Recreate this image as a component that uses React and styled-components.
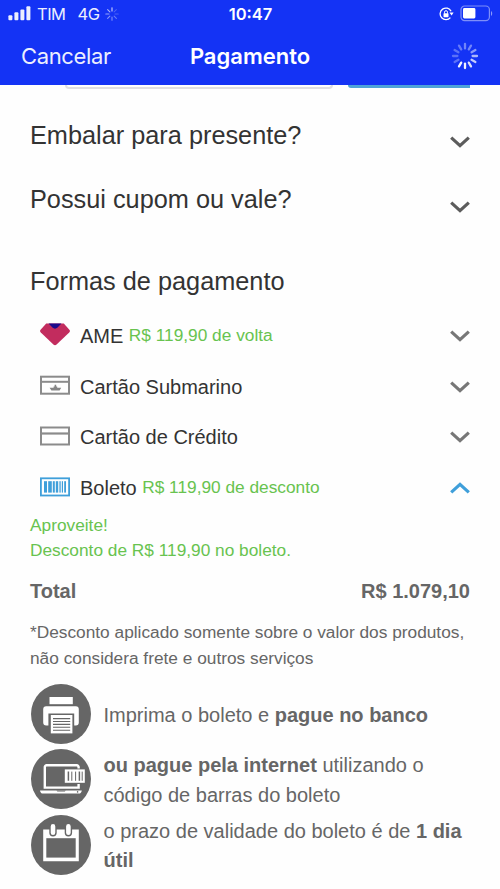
import React from "react";
import styled, { createGlobalStyle } from "styled-components";

const spokes = [0, 30, 60, 90, 120, 150, 180, 210, 240, 270, 300, 330];
const spokeOpacity = [0.4, 0.4, 0.5, 0.65, 0.75, 0.85, 0.95, 0.95, 0.3, 0.3, 0.3, 0.35];

function Spinner() {
  return (
    <svg width="28" height="28" viewBox="-14 -14 28 28">
      {spokes.map((angle, i) => (
        <line
          key={angle}
          y1="-7.6"
          y2="-12"
          stroke="#fff"
          strokeWidth="2.3"
          strokeLinecap="round"
          opacity={spokeOpacity[i]}
          transform={`rotate(${angle})`}
        />
      ))}
    </svg>
  );
}

function NetworkSpinner() {
  return (
    <svg width="14" height="14" viewBox="-7 -7 14 14">
      {[0, 45, 90, 135, 180, 225, 270, 315].map((angle, i) => (
        <line
          key={angle}
          y1="-3"
          y2="-6.2"
          stroke="#fff"
          strokeWidth="1.1"
          strokeLinecap="round"
          opacity={[0.85, 0.25, 0.25, 0.4, 0.5, 0.55, 0.6, 0.7][i]}
          transform={`rotate(${angle})`}
        />
      ))}
    </svg>
  );
}

function Signal() {
  return (
    <svg width="23" height="15" viewBox="0 0 23 15" fill="#fff">
      <rect x="0.4" y="9.2" width="4" height="5" rx="1" />
      <rect x="6.4" y="6.3" width="4" height="7.9" rx="1" />
      <rect x="12.4" y="3.4" width="4" height="10.8" rx="1" />
      <rect x="18.4" y="0.2" width="4" height="14" rx="1" />
    </svg>
  );
}

function RotationLock() {
  return (
    <svg width="15" height="14" viewBox="0 0 15 14" fill="none" stroke="#fff">
      <path d="M12.1 4.2A5.8 5.8 0 1 0 11.4 10.6" strokeWidth="1.3" />
      <path d="M10.4 5.6h4.2l-2 3z" fill="#fff" stroke="none" />
      <path d="M5.500 6.600V5.200a1.500 1.500 0 0 1 3 0v1.400" strokeWidth="1" />
      <rect x="4.500" y="6.200" width="5" height="4" rx="0.6" fill="#fff" stroke="none" />
    </svg>
  );
}

function Battery() {
  return (
    <svg width="33" height="17" viewBox="0 0 33 17">
      <rect x="1" y="1" width="28.4" height="14.6" rx="3.6" fill="none" stroke="#fff" strokeOpacity="0.45" strokeWidth="1.2" />
      <rect x="3" y="3.1" width="12.4" height="10.4" rx="1.4" fill="#fff" />
      <path d="M31 6c1.6.7 1.6 4.300 0 5z" fill="#fff" opacity="0.5" />
    </svg>
  );
}

function Chevron({ color, up }) {
  return (
    <svg width="20" height="12" viewBox="0 0 20 12">
      <path
        d={up ? "M1.2 10.4 10 2.400l8.800 8" : "M1.2 1.6 10 9.600l8.800-8"}
        fill="none"
        stroke={color}
        strokeWidth="3.2"
      />
    </svg>
  );
}

function AmeIcon() {
  return (
    <svg width="30" height="23" viewBox="0 0 30 23">
      <path d="M6.200.4h17.600L29.600 7q.8 1.200-.4 2.400L16.600 21.600q-1.600 1.400-3.200 0L.8 9.400Q-.4 8.200.4 7z" fill="#c22c5e" />
      <path d="M8.600.4h12.800l-3.800 4.200q-2.600 2.200-5.200 0z" fill="#1a0a8c" />
    </svg>
  );
}

function StoreCardIcon() {
  return (
    <svg width="30" height="20" viewBox="0 0 30 20">
      <rect x="1" y="1.700" width="28" height="17" fill="none" stroke="#8b8b8b" strokeWidth="2" />
      <path d="M1 6.800h28" stroke="#8b8b8b" strokeWidth="2" />
      <path d="M9.600 12.800h4v-1.200h1V9.800h1.600v1.800h1v1.200h4L19.600 15.600h-8.200z" fill="#858585" />
    </svg>
  );
}

function CardIcon() {
  return (
    <svg width="30" height="20" viewBox="0 0 30 20">
      <rect x="1" y="1.500" width="28" height="17" fill="none" stroke="#8b8b8b" strokeWidth="2" />
      <path d="M1 7.500h28" stroke="#8b8b8b" strokeWidth="2.2" />
    </svg>
  );
}

function BarcodeIcon() {
  return (
    <svg width="30" height="20" viewBox="0 0 30 20" fill="#3f9fda">
      <rect x="0.900" y="1.300" width="28.200" height="17.200" fill="none" stroke="#3f9fda" strokeWidth="1.800" />
      <rect x="4" y="4.200" width="3" height="11.400" />
      <rect x="8.200" y="4.200" width="3.600" height="11.400" />
      <rect x="12.800" y="4.200" width="2" height="11.400" />
      <rect x="15.800" y="4.200" width="2.400" height="11.400" />
      <rect x="19.400" y="4.200" width="1.300" height="11.400" />
      <rect x="21.800" y="4.200" width="1.200" height="11.400" />
      <rect x="24.200" y="4.200" width="1.800" height="11.400" />
    </svg>
  );
}

function PrinterIcon() {
  return (
    <svg width="60" height="60" viewBox="0 0 60 60" fill="#fff">
      <rect x="18.5" y="13" width="23.3" height="7.2" />
      <path d="M15.2 22.2h29.6a3 3 0 0 1 3 3V38.6a3 3 0 0 1-3 3h-1.6V29.4H17.400v12.200h-2.200a3 3 0 0 1-3-3V25.200a3 3 0 0 1 3-3z" />
      <rect x="19.800" y="31" width="21.600" height="18.400" />
      <path
        d="M22 34.600h17.200M22 37.500h17.200M22 40.400h17.200M22 43.300h17.200M22 46.200h17.200"
        stroke="#666"
        strokeWidth="1.100"
      />
    </svg>
  );
}

function LaptopIcon() {
  return (
    <svg width="60" height="60" viewBox="0 0 60 60" fill="#fff">
      <path
        d="M47.600 19.600V18a1.800 1.800 0 0 0-1.800-1.800H15.600a1.800 1.800 0 0 0-1.800 1.800v20.600h33.800v-3.600"
        fill="none"
        stroke="#fff"
        strokeWidth="2.400"
      />
      <path d="M9 41.400h41.800q-.4 3-3 3.200H12q-2.600-.2-3-3.200z" />
      <path d="M25.400 41.400h9.400l-1 1h-7.400z" fill="#666" />
      <circle cx="46.600" cy="42.900" r="0.8" fill="#666" />
      <rect x="33.800" y="20.400" width="20" height="13.400" />
      <path d="M37.400 22.600v9.200M48.400 22.600v9.200" stroke="#666" strokeWidth="1.500" />
      <path d="M40.800 22.600v9.200M44.600 22.600v9.200M51.200 22.600v9.200" stroke="#666" strokeWidth="1" />
    </svg>
  );
}

function CalendarIcon() {
  return (
    <svg width="60" height="60" viewBox="0 0 60 60">
      <path d="M12.200 14.600h35.600v31.600H12.200z" fill="#fff" />
      <path d="M15.300 23.200h29.400v19.400H15.300z" fill="#666" />
      <rect x="19" y="8.400" width="6" height="12.400" rx="3" fill="#fff" stroke="#666" strokeWidth="1.400" />
      <rect x="34.400" y="8.400" width="6" height="12.400" rx="3" fill="#fff" stroke="#666" strokeWidth="1.400" />
    </svg>
  );
}

const methods = [
  { name: "AME", bonus: "R$ 119,90 de volta", icon: <AmeIcon /> },
  { name: "Cartão Submarino", icon: <StoreCardIcon /> },
  { name: "Cartão de Crédito", icon: <CardIcon /> },
  { name: "Boleto", bonus: "R$ 119,90 de desconto", icon: <BarcodeIcon />, open: true },
];

export default function App() {
  return (
    <Screen>
      <GlobalStyle />
      <Header>
        <StatusBar>
          <Carrier>
            <Signal />
            <span>TIM</span>
            <Network>4G</Network>
            <NetworkSpinner />
          </Carrier>
          <Clock>10:47</Clock>
          <Indicators>
            <RotationLock />
            <Battery />
          </Indicators>
        </StatusBar>
        <NavBar>
          <Cancel>Cancelar</Cancel>
          <Title>Pagamento</Title>
          <NavEnd>
            <Spinner />
          </NavEnd>
        </NavBar>
      </Header>
      <Content>
        <FieldRow>
          <Field />
          <FieldButton />
        </FieldRow>
        <Section>
          <Heading>Embalar para presente?</Heading>
          <SectionToggle>
            <Chevron color="#5c5c5c" />
          </SectionToggle>
        </Section>
        <Section>
          <Heading>Possui cupom ou vale?</Heading>
          <SectionToggle>
            <Chevron color="#5c5c5c" />
          </SectionToggle>
        </Section>
        <MethodsHeading>Formas de pagamento</MethodsHeading>
        {methods.map((method) => (
          <Method key={method.name}>
            <MethodIcon>{method.icon}</MethodIcon>
            <MethodName>{method.name}</MethodName>
            {method.bonus && <Bonus>{method.bonus}</Bonus>}
            <MethodToggle>
              <Chevron up={method.open} color={method.open ? "#3f9fda" : "#777"} />
            </MethodToggle>
          </Method>
        ))}
        <Promo>
          Aproveite!
          <br />
          Desconto de R$ 119,90 no boleto.
        </Promo>
        <Total>
          <span>Total</span>
          <span>R$ 1.079,10</span>
        </Total>
        <Note>
          *Desconto aplicado somente sobre o valor dos produtos,
          <br />
          não considera frete e outros serviços
        </Note>
        <Steps>
          <Step>
            <StepIcon>
              <PrinterIcon />
            </StepIcon>
            <StepText>
              Imprima o boleto e <b>pague no banco</b>
            </StepText>
          </Step>
          <Step>
            <StepIcon>
              <LaptopIcon />
            </StepIcon>
            <StepText>
              <b>ou pague pela internet</b> utilizando o
              <br />
              código de barras do boleto
            </StepText>
          </Step>
          <Step>
            <StepIcon>
              <CalendarIcon />
            </StepIcon>
            <StepText>
              o prazo de validade do boleto é de <b>1 dia</b>
              <br />
              <b>útil</b>
            </StepText>
          </Step>
        </Steps>
      </Content>
    </Screen>
  );
}

const GlobalStyle = createGlobalStyle`
  * {
    box-sizing: border-box;
  }

  body {
    margin: 0;
    background: #fefefe;
  }

  p {
    margin: 0;
  }

  svg {
    display: block;
    flex-shrink: 0;
  }
`;

const Screen = styled.div`
  width: 500px;
  height: 889px;
  overflow: hidden;
  color: #333;
  font-family: "Liberation Sans", Arial, sans-serif;
  white-space: nowrap;
`;

const Header = styled.header`
  height: 85px;
  background: #1433f5;
  color: #fff;
  font-family: Inter, sans-serif;
`;

const StatusBar = styled.div`
  display: grid;
  grid-template-columns: 1fr auto 1fr;
  align-items: center;
  height: 27px;
  padding: 0 7px 0 8px;
  font-size: 16.5px;
`;

const Carrier = styled.div`
  display: flex;
  align-items: center;
  gap: 6px;
  letter-spacing: -0.5px;
  opacity: 0.92;
`;

const Network = styled.span`
  margin-left: 6px;
`;

const Clock = styled.div`
  font-weight: 600;
`;

const Indicators = styled.div`
  display: flex;
  align-items: center;
  justify-content: flex-end;
  gap: 6px;
`;

const NavBar = styled.nav`
  display: grid;
  grid-template-columns: 1fr auto 1fr;
  align-items: center;
  height: 58px;
  padding: 0 21px;
  font-size: 22px;
`;

const Cancel = styled.div`
  letter-spacing: -0.35px;
  opacity: 0.92;
`;

const Title = styled.div`
  font-weight: 600;
`;

const NavEnd = styled.div`
  display: flex;
  justify-content: flex-end;
`;

const Content = styled.main`
  padding: 0 30px;
`;

const FieldRow = styled.div`
  display: flex;
  justify-content: flex-end;
  gap: 15px;
  height: 17px;
`;

const Field = styled.div`
  width: 268px;
  height: 4px;
  border: 2px solid #dfdfe3;
  border-top: 0;
  border-radius: 0 0 4px 4px;
`;

const FieldButton = styled.div`
  width: 122px;
  height: 3px;
  background: #4ea3d8;
  border-radius: 0 0 0 3px;
`;

const Section = styled.section`
  display: flex;
  align-items: center;
  justify-content: space-between;
  height: 64.5px;
`;

const Heading = styled.h2`
  margin: 0;
  padding-top: 2px;
  font-size: 25.3px;
  font-weight: 400;
`;

const SectionToggle = styled.div`
  padding-top: 16px;
`;

const MethodsHeading = styled(Heading)`
  height: 80px;
  padding-top: 21px;
  line-height: 59px;
`;

const Method = styled.div`
  display: flex;
  align-items: center;
  height: 50.6px;
  padding-left: 10px;
`;

const MethodIcon = styled.div`
  width: 40px;
  padding-bottom: 3px;
`;

const MethodName = styled.span`
  padding-top: 1px;
  font-size: 20px;
`;

const Bonus = styled.span`
  margin-left: 5.5px;
  padding-bottom: 2px;
  color: #68c34f;
  font-size: 17.3px;
`;

const MethodToggle = styled.div`
  margin-left: auto;
`;

const Promo = styled.p`
  color: #68c34f;
  font-size: 17.3px;
  line-height: 25px;
`;

const Total = styled.div`
  display: flex;
  align-items: center;
  justify-content: space-between;
  height: 57px;
  color: #666;
  font-size: 20px;
  font-weight: 700;
`;

const Note = styled.p`
  color: #666;
  font-size: 17.3px;
  line-height: 25.4px;
`;

const Steps = styled.div`
  display: flex;
  flex-direction: column;
  gap: 5.2px;
  margin-top: 13px;
  color: #666;
  font-size: 20px;
  line-height: 29.4px;
`;

const Step = styled.div`
  display: flex;
  align-items: center;
  gap: 13px;
  height: 60px;
  padding-left: 0.5px;
`;

const StepIcon = styled.div`
  width: 60px;
  height: 60px;
  border-radius: 50%;
  background: #666;
`;

const StepText = styled.p`
  padding-top: 3px;
`;
